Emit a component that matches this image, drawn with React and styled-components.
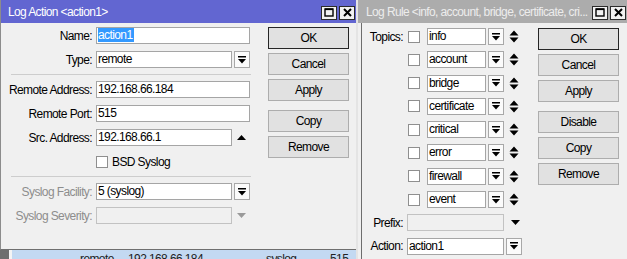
import React from 'react';
import styled, { createGlobalStyle } from 'styled-components';

const GlobalStyle = createGlobalStyle`
  html, body {
    margin: 0;
    padding: 0;
  }
  body {
    width: 627px;
    height: 259px;
    overflow: hidden;
    background: #f0f0f0;
    font-family: "Liberation Sans", Arial, sans-serif;
    font-size: 12px;
    letter-spacing: -0.6px;
    color: #000;
  }
`;

const Screen = styled.div`
  display: flex;
  width: 627px;
  height: 259px;
  overflow: hidden;
`;

const LeftColumn = styled.div`
  display: flex;
  flex-direction: column;
  width: 356px;
  flex-shrink: 0;
`;

const ActionWindow = styled.div`
  display: flex;
  flex-direction: column;
  flex-shrink: 0;
  height: 250px;
  box-sizing: border-box;
  background: #f0f0f0;
  border-left: 1px solid #8c8c8c;
  border-bottom: 1px solid #6f6f6f;
`;

const RuleWindow = styled.div`
  flex: 1;
  min-width: 0;
  display: flex;
  flex-direction: column;
  background: #f0f0f0;
  border-left: 2px solid #e4e4e4;
`;

const TitleBar = styled.div`
  height: 23px;
  flex-shrink: 0;
  display: flex;
  align-items: center;
  padding: 0 1px 0 ${(p) => p.$inset}px;
  background: ${(p) => (p.$active ? '#6266d1' : '#acacac')};
  color: ${(p) => (p.$active ? '#ffffff' : '#ececec')};
  letter-spacing: -0.62px;
`;

const TitleText = styled.div`
  flex: 1;
  min-width: 0;
  white-space: nowrap;
  overflow: hidden;
  padding-top: 1px;
`;

const CaptionButtons = styled.div`
  display: flex;
  gap: 2px;
  margin-top: 2px;
`;

const CaptionButton = styled.div`
  width: 16px;
  height: 14px;
  box-sizing: border-box;
  border: 1px solid #2c2c2c;
  background: #f2f2f2;
  display: flex;
  align-items: center;
  justify-content: center;
`;

const ActionBody = styled.div`
  flex: 1;
  display: flex;
  padding-top: 4px;
`;

const RuleBody = styled.div`
  flex: 1;
  display: flex;
  margin-left: 3px;
  border-left: 1px solid #6d6d6d;
  padding-top: 5px;
`;

const Form = styled.div`
  display: flex;
  flex-direction: column;
  gap: 7px;
  width: 250px;
`;

const RuleForm = styled.div`
  display: flex;
  flex-direction: column;
  gap: 6.3px;
`;

const FieldRow = styled.div`
  display: flex;
  align-items: center;
  height: 17px;
`;

const Label = styled.div`
  width: ${(p) => p.$w}px;
  margin-right: 4px;
  text-align: right;
  white-space: nowrap;
  color: ${(p) => (p.$muted ? '#8d8d8d' : '#000')};
`;

const Input = styled.div`
  width: ${(p) => p.$w}px;
  height: 17px;
  box-sizing: border-box;
  border: 1px solid ${(p) => (p.$disabled ? '#c2c2c2' : '#a5a5a5')};
  background: ${(p) => (p.$disabled ? '#f0f0f0' : '#ffffff')};
  padding: 0 1px;
  line-height: 15px;
  white-space: nowrap;
  overflow: hidden;
`;

const Selected = styled.span`
  background: #3399ff;
  color: #fff;
  padding-right: 1px;
`;

const DropButton = styled.div`
  width: 16px;
  height: 17px;
  margin-left: 2px;
  box-sizing: border-box;
  border: 1px solid #a8a8a8;
  background: #fbfbfb;
  display: flex;
  align-items: center;
  justify-content: center;
`;

const ArrowSlot = styled.div`
  width: ${(p) => p.$w}px;
  display: flex;
  justify-content: center;
`;

const Divider = styled.div`
  margin: -1px 0 -1px 10px;
  width: 240px;
  height: 1px;
  background: #cdcdcd;
`;

const Checkbox = styled.div`
  width: 12px;
  height: 12px;
  box-sizing: border-box;
  border: 1px solid #8f8f8f;
  background: #fff;
  margin-right: ${(p) => p.$after}px;
`;

const Spacer = styled.div`
  width: ${(p) => p.$w}px;
  flex-shrink: 0;
`;

const Buttons = styled.div`
  display: flex;
  flex-direction: column;
  gap: 4px;
  width: 81px;
  margin-left: ${(p) => p.$offset}px;
`;

const Button = styled.div`
  height: 22px;
  box-sizing: border-box;
  border: 1px solid ${(p) => (p.$default ? '#262626' : '#adadad')};
  background: #e1e1e1;
  display: flex;
  align-items: center;
  justify-content: center;
  margin-top: ${(p) => (p.$break ? 5 : 0)}px;
`;

const Backdrop = styled.div`
  flex: 1;
  min-height: 0;
  display: flex;
  overflow: hidden;
  background: #f4f4f4;
`;

const DarkEdge = styled.div`
  width: 9px;
  background: #6e6e6e;
  margin-right: 3px;
`;

const ListRow = styled.div`
  flex: 1;
  display: flex;
  background: #c3d9f2;
  padding: 2px 0 0 68px;
  color: #222;
  white-space: nowrap;
  overflow: hidden;
`;

const ListCell = styled.div`
  width: ${(p) => p.$w}px;
  flex-shrink: 0;
`;

const MaxGlyph = () => (
  <svg width="10" height="9" viewBox="0 0 10 9">
    <rect x="1" y="1" width="8" height="7" fill="none" stroke="#000" strokeWidth="1.4" />
    <rect x="1" y="0.5" width="8" height="1.6" fill="#000" />
  </svg>
);

const CloseGlyph = () => (
  <svg width="9" height="9" viewBox="0 0 9 9">
    <path d="M1 1 L8 8 M8 1 L1 8" stroke="#000" strokeWidth="2" />
  </svg>
);

const DropGlyph = () => (
  <svg width="8" height="8" viewBox="0 0 8 8">
    <rect x="0" y="0" width="8" height="1.5" fill="#000" />
    <path d="M0 3 L8 3 L4 7.5 Z" fill="#000" />
  </svg>
);

const Triangle = ({ up, color = '#000' }) => (
  <svg width="9" height="5" viewBox="0 0 9 5">
    <path d={up ? 'M0 5 L9 5 L4.5 0 Z' : 'M0 0 L9 0 L4.5 5 Z'} fill={color} />
  </svg>
);

const UpDownGlyph = () => (
  <svg width="10" height="13" viewBox="0 0 10 13">
    <path d="M0.5 5.5 L9.5 5.5 L5 0.5 Z M0.5 7.5 L9.5 7.5 L5 12.5 Z" fill="#000" />
  </svg>
);

const Caption = ({ active, inset, children }) => (
  <TitleBar $active={active} $inset={inset}>
    <TitleText>{children}</TitleText>
    <CaptionButtons>
      <CaptionButton>
        <MaxGlyph />
      </CaptionButton>
      <CaptionButton>
        <CloseGlyph />
      </CaptionButton>
    </CaptionButtons>
  </TitleBar>
);

const Field = ({ label, muted, children }) => (
  <FieldRow>
    <Label $w={91} $muted={muted}>
      {label}
    </Label>
    {children}
  </FieldRow>
);

const topics = ['info', 'account', 'bridge', 'certificate', 'critical', 'error', 'firewall', 'event'];

export default function App() {
  return (
    <>
      <GlobalStyle />
      <Screen>
        <LeftColumn>
          <ActionWindow>
            <Caption active inset={7}>
              Log Action &lt;action1&gt;
            </Caption>
            <ActionBody>
              <Form>
                <Field label="Name:">
                  <Input $w={154}>
                    <Selected>action1</Selected>
                  </Input>
                </Field>
                <Field label="Type:">
                  <Input $w={136}>remote</Input>
                  <DropButton>
                    <DropGlyph />
                  </DropButton>
                </Field>
                <Divider />
                <Field label="Remote Address:">
                  <Input $w={154}>192.168.66.184</Input>
                </Field>
                <Field label="Remote Port:">
                  <Input $w={154}>515</Input>
                </Field>
                <Field label="Src. Address:">
                  <Input $w={136}>192.168.66.1</Input>
                  <ArrowSlot $w={18}>
                    <Triangle up />
                  </ArrowSlot>
                </Field>
                <Field label="">
                  <Checkbox $after={4} />
                  BSD Syslog
                </Field>
                <Divider />
                <Field label="Syslog Facility:" muted>
                  <Input $w={136}>5 (syslog)</Input>
                  <DropButton>
                    <DropGlyph />
                  </DropButton>
                </Field>
                <Field label="Syslog Severity:" muted>
                  <Input $w={136} $disabled />
                  <ArrowSlot $w={18}>
                    <Triangle color="#9a9a9a" />
                  </ArrowSlot>
                </Field>
              </Form>
              <Buttons $offset={17}>
                <Button $default>OK</Button>
                <Button>Cancel</Button>
                <Button>Apply</Button>
                <Button $break>Copy</Button>
                <Button>Remove</Button>
              </Buttons>
            </ActionBody>
          </ActionWindow>
          <Backdrop>
            <DarkEdge />
            <ListRow>
              <ListCell $w={48}>remote</ListCell>
              <ListCell $w={138}>192.168.66.184</ListCell>
              <ListCell $w={64}>syslog</ListCell>
              <ListCell $w={40}>515</ListCell>
            </ListRow>
          </Backdrop>
        </LeftColumn>
        <RuleWindow>
          <Caption inset={8}>Log Rule &lt;info, account, bridge, certificate, cri...</Caption>
          <RuleBody>
            <RuleForm>
              {topics.map((topic, i) => (
                <FieldRow key={topic}>
                  <Label $w={41}>{i === 0 ? 'Topics:' : ''}</Label>
                  <Spacer $w={1} />
                  <Checkbox $after={7} />
                  <Input $w={59}>{topic}</Input>
                  <DropButton>
                    <DropGlyph />
                  </DropButton>
                  <Spacer $w={5} />
                  <UpDownGlyph />
                </FieldRow>
              ))}
              <FieldRow>
                <Label $w={41}>Prefix:</Label>
                <Input $w={97} $disabled />
                <ArrowSlot $w={22}>
                  <Triangle />
                </ArrowSlot>
              </FieldRow>
              <FieldRow>
                <Label $w={41}>Action:</Label>
                <Input $w={97}>action1</Input>
                <DropButton>
                  <DropGlyph />
                </DropButton>
              </FieldRow>
            </RuleForm>
            <Buttons $offset={12}>
              <Button $default>OK</Button>
              <Button>Cancel</Button>
              <Button>Apply</Button>
              <Button $break>Disable</Button>
              <Button>Copy</Button>
              <Button>Remove</Button>
            </Buttons>
          </RuleBody>
        </RuleWindow>
      </Screen>
    </>
  );
}
